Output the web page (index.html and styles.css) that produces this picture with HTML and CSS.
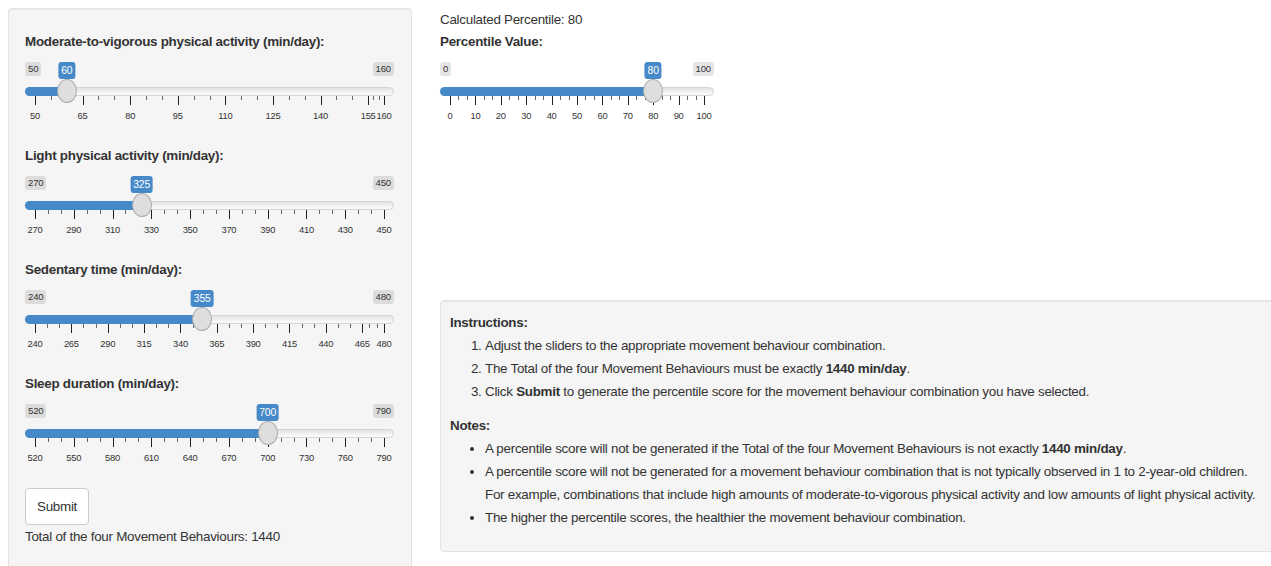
FILE: index.html
```html
<!DOCTYPE html>
<html lang="en">
<head>
<meta charset="utf-8">
<title>Movement Behaviour Percentile</title>
<link rel="stylesheet" href="styles.css">
</head>
<body>
<div class="page">
  <aside class="well sidebar">
    <label class="field-label">Moderate-to-vigorous physical activity (min/day):</label>
    <div class="slider" data-min="50" data-max="160" data-value="60" data-majors="50,65,80,95,110,125,140,155,160"></div>

    <label class="field-label">Light physical activity (min/day):</label>
    <div class="slider" data-min="270" data-max="450" data-value="325" data-majors="270,290,310,330,350,370,390,410,430,450"></div>

    <label class="field-label">Sedentary time (min/day):</label>
    <div class="slider" data-min="240" data-max="480" data-value="355" data-majors="240,265,290,315,340,365,390,415,440,465,480"></div>

    <label class="field-label">Sleep duration (min/day):</label>
    <div class="slider" data-min="520" data-max="790" data-value="700" data-majors="520,550,580,610,640,670,700,730,760,790"></div>

    <button class="btn" type="button">Submit</button>
    <div class="total">Total of the four Movement Behaviours: 1440</div>
  </aside>

  <main class="main">
    <div class="calc">Calculated Percentile: 80</div>
    <label class="field-label">Percentile Value:</label>
    <div class="slider slider-narrow" data-min="0" data-max="100" data-value="80" data-majors="0,10,20,30,40,50,60,70,80,90,100"></div>

    <section class="well info">
      <div class="info-title">Instructions:</div>
      <ol class="info-list">
        <li>Adjust the sliders to the appropriate movement behaviour combination.</li>
        <li>The Total of the four Movement Behaviours must be exactly <b>1440 min/day</b>.</li>
        <li>Click <b>Submit</b> to generate the percentile score for the movement behaviour combination you have selected.</li>
      </ol>
      <div class="info-title">Notes:</div>
      <ul class="info-list">
        <li>A percentile score will not be generated if the Total of the four Movement Behaviours is not exactly <b>1440 min/day</b>.</li>
        <li>A percentile score will not be generated for a movement behaviour combination that is not typically observed in 1 to 2-year-old children.<br>For example, combinations that include high amounts of moderate-to-vigorous physical activity and low amounts of light physical activity.</li>
        <li>The higher the percentile scores, the healthier the movement behaviour combination.</li>
      </ul>
    </section>
  </main>
</div>
<script src="script.js"></script>
</body>
</html>
```

FILE: styles.css
```css
* {
  box-sizing: border-box;
}

html,
body {
  margin: 0;
  overflow: hidden;
}

body {
  font-family: "Liberation Sans", Arial, sans-serif;
  font-size: 13.4px;
  letter-spacing: -0.27px;
  line-height: 20px;
  color: #333;
  background: #fff;
}

.page {
  display: flex;
  align-items: flex-start;
  padding: 8px 0 0 8px;
}

.well {
  background: #f5f5f5;
  border: 1px solid #e3e3e3;
  border-radius: 4px;
  box-shadow: inset 0 1px 1px rgba(0, 0, 0, 0.05);
}

/* left column with the four inputs */
.sidebar {
  flex: 0 0 404px;
  padding: 23px 17px 30px 16px;
}

.field-label {
  display: block;
  font-weight: bold;
}

/* range slider */
.slider {
  position: relative;
  letter-spacing: 0;
}

.slider-narrow {
  width: 274px;
}

.slider-ends {
  display: flex;
  justify-content: space-between;
  padding-top: 10px;
}

.slider-end {
  font-size: 9.6px;
  line-height: 14px;
  padding: 0 3px;
  letter-spacing: -0.2px;
  background: rgba(0, 0, 0, 0.1);
  border-radius: 3px;
}

.slider-track {
  margin-top: 11px;
  height: 9px;
  border: 1px solid #d3d3d3;
  border-radius: 8px;
  background: linear-gradient(#e2e2e2, #fdfdfd);
}

.slider-fill {
  position: absolute;
  top: 35px;
  left: 0;
  height: 9px;
  background: #4589c8;
  border-radius: 8px 0 0 8px;
}

.slider-scale {
  position: relative;
  margin: 0 10px;
  height: 50px;
}

.tick {
  position: absolute;
  top: 0;
  width: 1px;
  height: 9px;
  background: #222;
}

.tick-small {
  height: 4px;
  background: #666;
}

.tick-label {
  position: absolute;
  top: 15px;
  font-size: 9.4px;
  line-height: 10px;
  letter-spacing: -0.25px;
  color: #333;
  transform: translateX(-50%);
  white-space: nowrap;
}

.slider-handles {
  position: absolute;
  top: 0;
  bottom: 0;
  left: 10px;
  right: 10px;
}

.slider-value {
  position: absolute;
  top: 10px;
  transform: translateX(-50%);
  font-size: 10.4px;
  line-height: 17px;
  letter-spacing: -0.2px;
  padding: 0 3px;
  color: #fff;
  background: #4589c8;
  border-radius: 3px;
}

.slider-knob {
  position: absolute;
  top: 27px;
  width: 20px;
  height: 24px;
  margin-left: -10px;
  border-radius: 50%;
  background: #dedede;
  border: 1px solid #ababab;
}

.btn {
  display: block;
  height: 37px;
  padding: 0 11px;
  font: inherit;
  letter-spacing: inherit;
  color: #333;
  background: #fff;
  border: 1px solid #ccc;
  border-radius: 4px;
}

.total {
  margin-top: 2px;
}

/* right column */
.main {
  flex: 0 0 860px;
  margin-left: 28px;
  padding-top: 2px;
}

.calc {
  margin-bottom: 2px;
}

.info {
  margin-top: 154px;
  padding: 10px 19px 22px 9px;
  line-height: 23px;
}

.info-title {
  font-weight: bold;
}

.info-list {
  margin: 0 0 11px;
  padding-left: 35px;
}

.info-list:last-child {
  margin-bottom: 0;
}
```

FILE: script.js
```js
// Builds the range sliders from their data attributes.
document.querySelectorAll('.slider').forEach(function (el) {
  var min = Number(el.dataset.min);
  var max = Number(el.dataset.max);
  var value = Number(el.dataset.value);
  var majors = el.dataset.majors.split(',').map(Number);

  function pct(v) {
    return (v - min) / (max - min) * 100;
  }

  function make(tag, cls, text) {
    var node = document.createElement(tag);
    node.className = cls;
    if (text !== undefined) node.textContent = text;
    return node;
  }

  var ends = make('div', 'slider-ends');
  ends.appendChild(make('span', 'slider-end', String(min)));
  ends.appendChild(make('span', 'slider-end', String(max)));
  el.appendChild(ends);

  el.appendChild(make('div', 'slider-track'));

  var fill = make('div', 'slider-fill');
  var ratio = (value - min) / (max - min);
  fill.style.width = 'calc(10px + (100% - 20px) * ' + ratio.toFixed(4) + ')';
  el.appendChild(fill);

  var scale = make('div', 'slider-scale');
  majors.forEach(function (m, i) {
    if (i > 0) {
      var prev = majors[i - 1];
      for (var z = 1; z <= 2; z++) {
        var s = make('span', 'tick tick-small');
        s.style.left = pct(prev + (m - prev) * z / 3).toFixed(3) + '%';
        scale.appendChild(s);
      }
    }
    var t = make('span', 'tick');
    t.style.left = pct(m).toFixed(3) + '%';
    scale.appendChild(t);
    var lbl = make('span', 'tick-label', String(m));
    lbl.style.left = pct(m).toFixed(3) + '%';
    scale.appendChild(lbl);
  });
  el.appendChild(scale);

  var handles = make('div', 'slider-handles');
  var val = make('span', 'slider-value', String(value));
  val.style.left = pct(value).toFixed(3) + '%';
  handles.appendChild(val);
  var knob = make('span', 'slider-knob');
  knob.style.left = pct(value).toFixed(3) + '%';
  handles.appendChild(knob);
  el.appendChild(handles);
});
```
